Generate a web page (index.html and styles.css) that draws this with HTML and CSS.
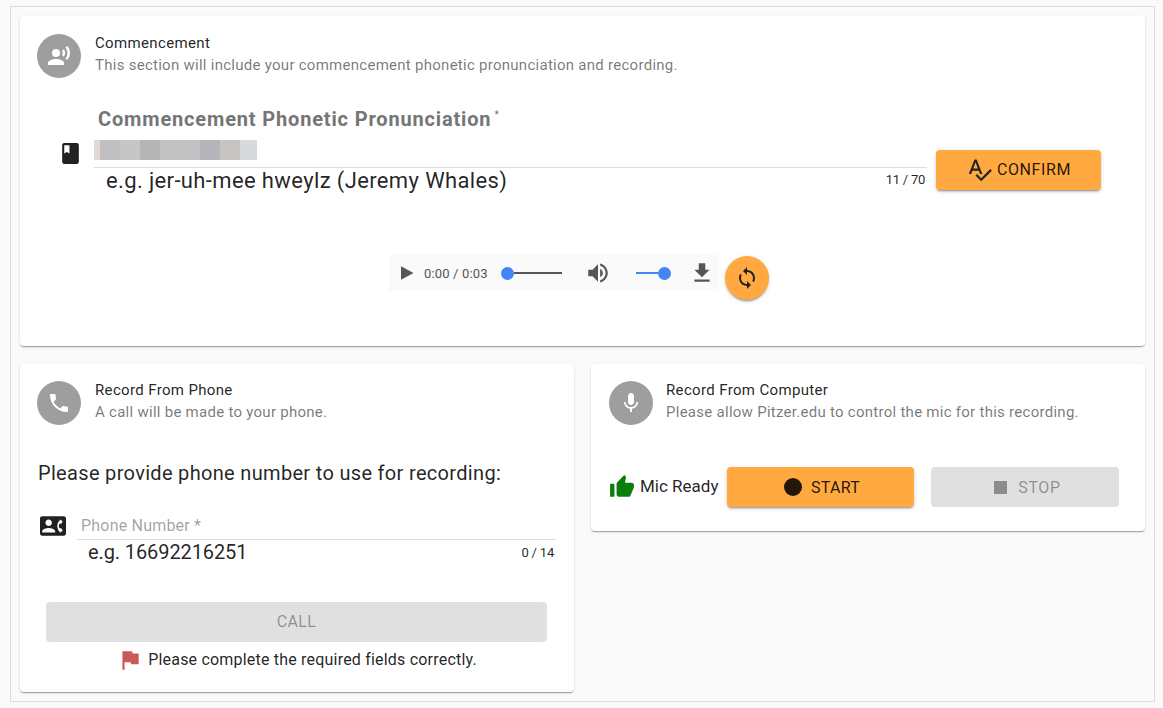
FILE: index.html
```html
<!DOCTYPE html>
<html lang="en">
<head>
<meta charset="utf-8">
<title>Commencement</title>
<link rel="stylesheet" href="styles.css">
</head>
<body>
<main class="frame">
  <section class="card card-top">
    <header class="head">
      <span class="avatar"><svg viewBox="0 0 24 24" class="av-icon"><circle cx="9" cy="9" r="4"/><path d="M9 15c-2.67 0-8 1.34-8 4v2h16v-2c0-2.66-5.33-4-8-4z"/><path d="M16.76 5.36l-1.68 1.69c.84 1.18.84 2.71 0 3.89l1.68 1.69c2.02-2.02 2.02-5.07 0-7.27zM20.07 2l-1.63 1.63c2.77 3.02 2.77 7.56 0 10.74L20.07 16c3.9-3.89 3.91-9.95 0-14z"/></svg></span>
      <div class="head-text">
        <div class="title">Commencement</div>
        <div class="sub">This section will include your commencement phonetic pronunciation and recording.</div>
      </div>
    </header>
    <div class="phonetic">
      <svg viewBox="0 0 24 24" class="book"><path d="M18 2H6c-1.1 0-2 .9-2 2v16c0 1.1.9 2 2 2h12c1.1 0 2-.9 2-2V4c0-1.1-.9-2-2-2zM6 4h5v8l-2.5-1.5L6 12V4z"/></svg>
      <div class="phonetic-field">
        <div class="big-label">Commencement Phonetic Pronunciation<sup class="ast">*</sup></div>
        <div class="mosaic"><i class="m1"></i><i class="m2"></i><i class="m3"></i><i class="m4"></i><i class="m5"></i><i class="m6"></i><i class="m7"></i><i class="m8"></i></div>
        <div class="rule"></div>
        <div class="hint-row"><span class="hint">e.g. jer-uh-mee hweylz (Jeremy Whales)</span><span class="count">11 / 70</span></div>
      </div>
      <button class="btn btn-orange btn-confirm"><svg viewBox="0 0 24 24" class="spell"><path d="M12.45 16h2.09L9.43 3H7.57L2.46 16h2.09l1.12-3h5.64l1.14 3zm-6.02-5L8.5 5.48 10.57 11H6.43zm15.16.59l-8.09 8.09L9.83 16l-1.41 1.41 5.09 5.09L23 13l-1.41-1.41z"/></svg>CONFIRM</button>
    </div>
    <div class="player-row">
      <div class="player">
        <svg viewBox="0 0 24 24" class="play"><path d="M6 4l15 8-15 8z"/></svg>
        <span class="time">0:00 / 0:03</span>
        <span class="seek"><b class="dot"></b><b class="track"></b></span>
        <svg viewBox="0 0 24 24" class="vol"><path d="M3 9v6h4l5 5V4L7 9H3zm13.5 3c0-1.77-1.02-3.29-2.5-4.03v8.05c1.48-.73 2.5-2.25 2.5-4.02z"/><path d="M14 3.23v2.06c2.89.86 5 3.54 5 6.71s-2.11 5.85-5 6.71v2.06c4.01-.91 7-4.49 7-8.77s-2.99-7.86-7-8.77z"/></svg>
        <span class="volume"><b class="vtrack"></b><b class="dot"></b></span>
        <svg viewBox="0 0 24 24" class="dl"><path d="M19 9h-4V3H9v6H5l7 7 7-7zM5 18v2h14v-2H5z"/></svg>
      </div>
      <button class="fab"><svg viewBox="0 0 24 24" class="cached"><path d="M12 4V1L8 5l4 4V6c3.31 0 6 2.69 6 6 0 1.01-.25 1.97-.7 2.8l1.46 1.46C19.54 15.03 20 13.57 20 12c0-4.42-3.58-8-8-8zm0 14c-3.31 0-6-2.69-6-6 0-1.01.25-1.97.7-2.8L5.24 7.74C4.46 8.97 4 10.43 4 12c0 4.42 3.58 8 8 8v3l4-4-4-4v3z"/></svg></button>
    </div>
  </section>

  <div class="columns">
    <section class="card card-phone">
      <header class="head">
        <span class="avatar"><svg viewBox="0 0 24 24" class="av-icon"><path d="M6.62 10.79c1.44 2.83 3.76 5.14 6.59 6.59l2.2-2.2c.27-.27.67-.36 1.02-.24 1.12.37 2.33.57 3.57.57.55 0 1 .45 1 1V20c0 .55-.45 1-1 1-9.39 0-17-7.61-17-17 0-.55.45-1 1-1h3.5c.55 0 1 .45 1 1 0 1.25.2 2.45.57 3.57.11.35.03.74-.25 1.02l-2.2 2.2z"/></svg></span>
        <div class="head-text">
          <div class="title">Record From Phone</div>
          <div class="sub">A call will be made to your phone.</div>
        </div>
      </header>
      <p class="prompt">Please provide phone number to use for recording:</p>
      <div class="phone-field">
        <svg viewBox="0 0 24 24" class="contact"><path d="M22 3H2C.9 3 0 3.9 0 5v14c0 1.1.9 2 2 2h20c1.1 0 2-.9 2-2V5c0-1.1-.9-2-2-2zM8 6c1.66 0 3 1.34 3 3s-1.34 3-3 3-3-1.34-3-3 1.34-3 3-3zm6 12H2v-1c0-2 4-3.1 6-3.1s6 1.1 6 3.1v1zm3.85-4h1.64L21 16l-1.99 1.99c-1.31-.98-2.28-2.38-2.73-3.99-.18-.64-.28-1.31-.28-2s.1-1.36.28-2c.45-1.62 1.42-3.01 2.73-3.99L21 8l-1.51 2h-1.64c-.22.63-.35 1.3-.35 2s.13 1.37.35 2z"/></svg>
        <div class="phone-input">
          <div class="ph-label">Phone Number *</div>
          <div class="rule"></div>
          <div class="hint-row"><span class="hint hint-phone">e.g. 16692216251</span><span class="count count-phone">0 / 14</span></div>
        </div>
      </div>
      <button class="btn btn-disabled btn-call">CALL</button>
      <div class="warn"><svg viewBox="0 0 24 24" class="flag"><path d="M14.4 6L14 4H5v17h2v-7h5.6l.4 2h7V6z"/></svg>Please complete the required fields correctly.</div>
    </section>

    <section class="card card-mic">
      <header class="head">
        <span class="avatar"><svg viewBox="0 0 24 24" class="av-icon"><path d="M12 14c1.66 0 2.99-1.34 2.99-3L15 5c0-1.66-1.34-3-3-3S9 3.34 9 5v6c0 1.66 1.34 3 3 3zm5.3-3c0 3-2.54 5.1-5.3 5.1S6.7 14 6.7 11H5c0 3.41 2.72 6.23 6 6.72V21h2v-3.28c3.28-.48 6-3.3 6-6.72h-1.7z"/></svg></span>
        <div class="head-text head-text-mic">
          <div class="title">Record From Computer</div>
          <div class="sub">Please allow Pitzer.edu to control the mic for this recording.</div>
        </div>
      </header>
      <div class="mic-row">
        <svg viewBox="0 0 24 24" class="thumb"><path d="M1 21h4V9H1v12zm22-11c0-1.1-.9-2-2-2h-6.31l.95-4.57.03-.32c0-.41-.17-.79-.44-1.06L14.17 1 7.59 7.59C7.22 7.95 7 8.45 7 9v10c0 1.1.9 2 2 2h9c.83 0 1.54-.5 1.84-1.22l3.02-7.05c.09-.23.14-.47.14-.73v-2z"/></svg>
        <span class="ready">Mic Ready</span>
        <button class="btn btn-orange btn-start"><i class="rec"></i>START</button>
        <button class="btn btn-disabled btn-stop"><i class="stop"></i>STOP</button>
      </div>
    </section>
  </div>
</main>
</body>
</html>
```
FILE: styles.css
```css
* { box-sizing: border-box; }
html, body { margin: 0; height: 100%; }
body {
  background: #fafafa;
  font-family: Roboto, "Liberation Sans", sans-serif;
  color: rgba(0,0,0,.87);
  overflow: hidden;
}
.frame {
  margin: 6px 8px 0 10px;
  height: 696px;
  border: 1px solid #ddd;
  padding: 9px;
}
.card {
  background: #fff;
  border-radius: 4px;
  box-shadow: 0 2px 1px -1px rgba(0,0,0,.2), 0 1px 1px 0 rgba(0,0,0,.14), 0 1px 3px 0 rgba(0,0,0,.12);
}
.card-top { height: 330px; padding: 18px 17px 0; }
.head { display: flex; align-items: flex-start; }
.avatar {
  width: 44px; height: 44px; border-radius: 50%;
  background: #9e9e9e;
  display: flex; align-items: center; justify-content: center;
  flex: none;
}
.av-icon { width: 24px; height: 24px; fill: #fff; }
.head-text { margin-left: 14px; }
.head-text-mic { margin-left: 13px; }
.title { font-size: 15px; line-height: 18px; letter-spacing: .35px; }
.sub { font-size: 15px; line-height: 18px; margin-top: 4px; color: rgba(0,0,0,.54); letter-spacing: .27px; }
.phonetic { display: flex; align-items: flex-start; margin-top: 28px; }
.book { width: 25px; height: 25px; fill: #212121; margin: 35px 0 0 21px; flex: none; }
.phonetic-field { width: 833px; margin-left: 11px; }
.big-label { font-size: 20px; font-weight: 700; line-height: 26px; color: #757575; padding-left: 4px; letter-spacing: .84px; }
.ast { font-size: 10px; font-weight: 400; line-height: 0; vertical-align: 8px; margin-left: 3px; }
.mosaic { display: flex; height: 20px; margin-top: 8px; width: 163px; }
.mosaic i { display: block; height: 100%; }
.m1 { width: 6px; background: #e2dad2; }
.m2 { width: 20px; background: #c0c0c2; }
.m3 { width: 20px; background: #c6c6c6; }
.m4 { width: 20px; background: #b5b5b5; }
.m5 { width: 40px; background: #c2c2c2; }
.m6 { width: 20px; background: #b3b5b8; }
.m7 { width: 20px; background: #c8c4c1; }
.m8 { width: 17px; background: #d6dadb; }
.rule { height: 1px; background: #ddd; margin-top: 7px; }
.hint-row { display: flex; justify-content: space-between; align-items: flex-start; }
.hint { font-size: 22px; line-height: 24px; padding: 1px 0 0 12px; color: rgba(0,0,0,.87); letter-spacing: .37px; }
.count { font-size: 13px; line-height: 14px; margin-top: 5px; padding-right: 2px; letter-spacing: -.25px; }
.count-phone { margin-top: 6px; letter-spacing: -.2px; }
.btn {
  border: 0; border-radius: 4px; font-family: inherit; font-size: 16px; height: 40px;
  display: flex; align-items: center; justify-content: center;
  letter-spacing: .3px; padding: 0;
}
.btn-orange {
  background: #ffa940; color: rgba(0,0,0,.87);
  box-shadow: 0 3px 1px -2px rgba(0,0,0,.2), 0 2px 2px 0 rgba(0,0,0,.14), 0 1px 5px 0 rgba(0,0,0,.12);
}
.btn-disabled { background: #e0e0e0; color: rgba(0,0,0,.38); }
.btn-confirm { width: 165px; margin: 44px 0 0 9px; letter-spacing: .6px; padding-bottom: 1px; }
.spell { width: 27px; height: 27px; fill: #222; margin-right: 4px; }
.player-row { display: flex; justify-content: center; align-items: flex-start; margin-top: 62px; padding-right: 7px; }
.player {
  width: 330px; height: 36px; background: #fafafa;
  display: flex; align-items: center; padding-left: 7px;
}
.play { width: 20px; height: 20px; fill: #555; flex: none; }
.time { font-size: 13px; color: #555; margin-left: 8px; letter-spacing: .15px; width: 70px; white-space: nowrap; }
.seek { display: flex; align-items: center; margin-left: 7px; width: 61px; }
.dot { display: block; width: 13px; height: 13px; border-radius: 50%; background: #4285f4; flex: none; }
.track { display: block; height: 2px; flex: 1; background: #555; }
.vol { width: 26px; height: 26px; fill: #555; margin-left: 23px; flex: none; }
.volume { display: flex; align-items: center; width: 35px; margin-left: 25px; }
.vtrack { display: block; height: 2px; flex: 1; background: #4285f4; }
.dl { width: 26px; height: 26px; fill: #555; margin-left: 18px; flex: none; }
.fab {
  width: 44px; height: 44px; border-radius: 50%; border: 0; padding: 0; margin: 1px 0 0 6px;
  background: #ffa940;
  display: flex; align-items: center; justify-content: center;
  box-shadow: 0 3px 1px -2px rgba(0,0,0,.2), 0 2px 2px 0 rgba(0,0,0,.14), 0 1px 5px 0 rgba(0,0,0,.12);
}
.cached { width: 24px; height: 24px; fill: #222; }
.columns { display: grid; grid-template-columns: 554px 554px; column-gap: 17px; align-items: start; margin-top: 18px; }
.card-phone { height: 328px; padding: 17px 17px 0; }
.card-mic { height: 167px; padding: 17px 18px 0; }
.prompt { font-size: 20px; line-height: 24px; margin: 36px 0 0 1px; letter-spacing: .32px; }
.phone-field { display: flex; align-items: flex-start; margin-top: 28px; }
.contact { width: 26px; height: 26px; fill: #212121; margin: 0 0 0 3px; flex: none; }
.phone-input { width: 479px; margin-left: 11px; }
.ph-label { font-size: 16px; line-height: 20px; color: rgba(0,0,0,.38); padding-left: 4px; margin-top: 3px; letter-spacing: .2px; }
.phone-input .rule { margin-top: 3px; }
.hint-phone { padding: 0 0 0 11px; font-size: 20px; letter-spacing: -.1px; }
.btn-call { width: 501px; margin: 38px 0 0 9px; padding-bottom: 1px; }
.warn { display: flex; align-items: center; justify-content: center; font-size: 16px; line-height: 20px; margin-top: 5px; letter-spacing: .2px; }
.flag { width: 26px; height: 26px; fill: #c95a5a; margin-right: 5px; }
.mic-row { display: flex; align-items: center; margin-top: 42px; height: 40px; }
.thumb { width: 26px; height: 26px; fill: #0a7d0a; flex: none; }
.ready { font-size: 17px; margin: 0 0 3px 5px; white-space: nowrap; }
.btn-start { width: 187px; margin-left: 9px; padding-left: 2px; }
.btn-stop { width: 188px; margin-left: 17px; padding-left: 4px; letter-spacing: .6px; }
.rec { width: 18px; height: 18px; border-radius: 50%; background: #231709; margin-right: 9px; }
.stop { width: 13px; height: 13px; background: #8c8c8c; margin-right: 11px; }
```
